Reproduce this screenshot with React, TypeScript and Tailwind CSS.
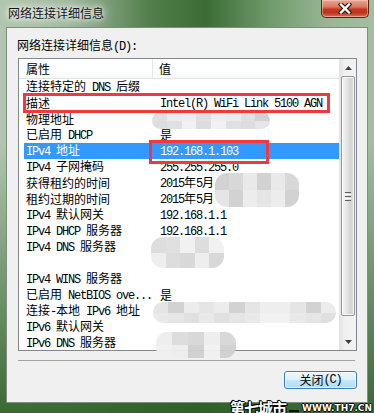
import React from "react";

function T({ text }: { text: string }) {
  const runs: { latin: boolean; s: string }[] = [];
  for (const ch of text) {
    const l = ch.charCodeAt(0) < 0x2000;
    const last = runs[runs.length - 1];
    if (last && last.latin === l) last.s += ch;
    else runs.push({ latin: l, s: ch });
  }
  return (
    <>
      {runs.map((r, i) =>
        r.latin ? (
          <span key={i} className="font-['Liberation_Mono',monospace] tracking-[-1.2px] whitespace-pre">
            {r.s}
          </span>
        ) : (
          <span key={i} className="font-['Noto_Sans_CJK_SC',sans-serif]">
            {r.s}
          </span>
        )
      )}
    </>
  );
}

const rows: [string, string][] = [
  ["连接特定的 DNS 后缀", ""],
  ["描述", "Intel(R) WiFi Link 5100 AGN"],
  ["物理地址", ""],
  ["已启用 DHCP", "是"],
  ["IPv4 地址", "192.168.1.103"],
  ["IPv4 子网掩码", "255.255.255.0"],
  ["获得租约的时间", "2015年5月"],
  ["租约过期的时间", "2015年5月"],
  ["IPv4 默认网关", "192.168.1.1"],
  ["IPv4 DHCP 服务器", "192.168.1.1"],
  ["IPv4 DNS 服务器", ""],
  ["", ""],
  ["IPv4 WINS 服务器", ""],
  ["已启用 NetBIOS ove...", "是"],
  ["连接-本地 IPv6 地址", ""],
  ["IPv6 默认网关", ""],
  ["IPv6 DNS 服务器", ""],
];

const grays = [
  "bg-[#d6d6d6]",
  "bg-[#e4e4e4]",
  "bg-[#ececec]",
  "bg-[#dcdcdc]",
  "bg-[#f1f1f1]",
  "bg-[#d0d0d0]",
  "bg-[#e8e8e8]",
  "bg-[#dfdfdf]",
  "bg-[#eeeeee]",
];

function Cells({ n, seed }: { n: number; seed: number }) {
  return (
    <div className="flex flex-col h-full w-full">
      {[0, 1].map((r) => (
        <div key={r} className="flex flex-1">
          {Array.from({ length: n }).map((_, c) => (
            <div key={c} className={"flex-1 " + grays[(seed * 7 + r * 5 + c * 3 + c * c) % grays.length]} />
          ))}
        </div>
      ))}
    </div>
  );
}

function UpArrow() {
  return (
    <svg width="7" height="4" viewBox="0 0 7 4">
      <polygon points="3.5,0 7,4 0,4" fill="#3f3f3f" />
    </svg>
  );
}
function DownArrow() {
  return (
    <svg width="7" height="4" viewBox="0 0 7 4">
      <polygon points="0,0 7,0 3.5,4" fill="#3f3f3f" />
    </svg>
  );
}

export default function App() {
  return (
    <div className="relative w-[374px] h-[413px] overflow-hidden flex flex-col select-none text-black bg-[linear-gradient(180deg,rgba(45,96,38,0)_0%,rgba(45,96,38,0)_35%,rgba(45,96,38,0.9)_100%),linear-gradient(90deg,#b2c5b0_0%,#a0b99e_18%,#527f4b_40%,#3c6c36_55%,#6f9a6b_72%,#99b797_88%,#a3bea1_100%)]">
      {/* title bar */}
      <div className="relative h-[27px] shrink-0 flex items-start">
        <span className="ml-[8px] mt-[5px] text-[12px] leading-[16px] text-[#151515] [text-shadow:0_0_8px_rgba(255,255,255,0.95),0_0_4px_rgba(255,255,255,0.9),0_0_14px_rgba(255,255,255,0.7)]">
          <T text="网络连接详细信息" />
        </span>
        <div className="absolute right-[5px] top-0 w-[48px] h-[18px] rounded-b-[5px] border border-t-0 border-[#5b2419] bg-[linear-gradient(180deg,#e8a594_0%,#db7a62_40%,#c2391e_55%,#b93418_75%,#d7775b_100%)] shadow-[inset_0_0_0_1px_rgba(255,220,210,0.45)] flex items-center justify-center">
          <svg width="14" height="11" viewBox="0 0 14 11">
            <path d="M3 1.5 L11 9.5 M11 1.5 L3 9.5" stroke="#3a1d18" strokeWidth="4.6" strokeLinecap="square" />
            <path d="M3 1.5 L11 9.5 M11 1.5 L3 9.5" stroke="#ffffff" strokeWidth="2.4" strokeLinecap="square" />
          </svg>
        </div>
      </div>

      {/* client area */}
      <div className="flex-1 mx-[6px] mb-[10px] bg-[#f0f0f0] border border-[#7f8d7e] flex flex-col pl-[11px] pr-[10px]">
        <div className="mt-[9px] ml-[-1px] h-[16px] text-[12px] leading-[16px] whitespace-nowrap">
          <T text="网络连接详细信息(D):" />
        </div>

        <div className="mt-[5px] h-[293px] border border-[#828790] bg-white flex overflow-hidden">
          <div className="flex-1 flex flex-col overflow-hidden text-[12px]">
            <div className="h-[20px] shrink-0 flex border-b border-[#e2e3e6] bg-[linear-gradient(180deg,#ffffff_0%,#ffffff_60%,#f6f7f9_100%)]">
              <div className="w-[134px] border-r border-[#e3e5e8] pl-[7px] flex items-center leading-[16px]">
                <T text="属性" />
              </div>
              <div className="flex-1 pl-[6px] flex items-center leading-[16px]">
                <T text="值" />
              </div>
            </div>
            {rows.map(([k, v], i) => {
              const sel = i === 4;
              return (
                <div
                  key={i}
                  className={
                    "h-[16px] shrink-0 ml-[5px] flex items-center leading-[16px] whitespace-nowrap " +
                    (sel ? "bg-[#3399ff] text-white" : "")
                  }
                >
                  <div className="w-[129px] shrink-0 pl-[2px]">
                    <T text={k} />
                  </div>
                  <div className="flex-1 pl-[7px]">
                    <T text={v} />
                  </div>
                </div>
              );
            })}
          </div>
          {/* scrollbar */}
          <div className="w-[17px] shrink-0 flex flex-col border-l border-[#e6e6e6] bg-[linear-gradient(90deg,#e3e3e3_0%,#f1f1f1_30%,#f1f1f1_100%)]">
            <div className="h-[17px] shrink-0 flex items-center justify-center">
              <UpArrow />
            </div>
            <div className="h-[240px] shrink-0 mx-[1px] rounded-[2px] border border-[#979797] bg-[linear-gradient(90deg,#f4f4f4_0%,#e8e8e8_35%,#d3d3d3_70%,#e0e0e0_100%)] shadow-[inset_0_0_0_1px_rgba(255,255,255,0.7)] flex flex-col items-center justify-center gap-[1px]">
              <div className="w-[6px] h-[1px] bg-[#5f5f5f]" />
              <div className="w-[6px] h-[1px] bg-[#ffffff]" />
              <div className="w-[6px] h-[1px] bg-[#5f5f5f]" />
              <div className="w-[6px] h-[1px] bg-[#ffffff]" />
              <div className="w-[6px] h-[1px] bg-[#5f5f5f]" />
            </div>
            <div className="flex-1" />
            <div className="h-[17px] shrink-0 flex items-center justify-center">
              <DownArrow />
            </div>
          </div>
        </div>

        <div className="mt-[9px] h-[1px] bg-[#a3a3a3] mr-[2px]" />

        <div className="mt-[10px] self-end w-[73px] h-[18px] rounded-[3px] border border-[#3c7fb1] bg-[linear-gradient(180deg,#edf7fd_0%,#ddf1fc_48%,#c4e7fb_52%,#b4dcf4_100%)] shadow-[inset_0_0_0_1px_rgba(255,255,255,0.6)] flex items-center justify-center text-[12px] leading-[16px] whitespace-nowrap">
          <T text="关闭(C)" />
        </div>
      </div>

      {/* blurred (pixelated) privacy areas */}
      <div className="absolute left-[152px] top-[112px] w-[118px] h-[17px] rounded-[9px] overflow-hidden opacity-95 blur-[0.6px]">
        <Cells n={8} seed={1} />
      </div>
      <div className="absolute left-[215px] top-[173px] w-[84px] h-[34px] rounded-[12px] overflow-hidden opacity-95 blur-[0.6px]">
        <Cells n={6} seed={2} />
      </div>
      <div className="absolute left-[151px] top-[237px] w-[73px] h-[31px] rounded-[12px] overflow-hidden opacity-95 blur-[0.6px]">
        <Cells n={5} seed={3} />
      </div>
      <div className="absolute left-[153px] top-[302px] w-[183px] h-[21px] rounded-[10px] overflow-hidden opacity-95 blur-[0.6px]">
        <Cells n={12} seed={4} />
      </div>
      <div className="absolute left-[156px] top-[332px] w-[80px] h-[26px] rounded-[11px] overflow-hidden opacity-95 blur-[0.6px]">
        <Cells n={5} seed={5} />
      </div>

      {/* red annotation boxes */}
      <div className="absolute left-[23px] top-[93px] w-[307px] h-[20px] border-[3px] border-[#f0393c]" />
      <div className="absolute left-[149px] top-[140px] w-[120px] h-[24px] border-[3px] border-[#f0393c]" />

      {/* watermark */}
      <div className="absolute right-[2px] bottom-[-3px] flex items-end gap-[3px]">
        <span className="text-[15px] leading-[17px] font-bold tracking-[-1px] text-white font-['Noto_Sans_CJK_SC',sans-serif] [text-shadow:1px_0_0_#000,-1px_0_0_#000,0_1px_0_#000,0_-1px_0_#000,1px_1px_0_#000,-1px_-1px_0_#000]">
          第七城市
        </span>
        <span className="mb-[4px] h-[2px] w-[10px] bg-black" />
        <span className="mb-[3px] text-[9px] leading-[10px] font-bold text-white font-['DejaVu_Sans',sans-serif] [text-shadow:1px_0_0_#000,-1px_0_0_#000,0_1px_0_#000,0_-1px_0_#000]">
          WWW.TH7.CN
        </span>
      </div>
    </div>
  );
}
